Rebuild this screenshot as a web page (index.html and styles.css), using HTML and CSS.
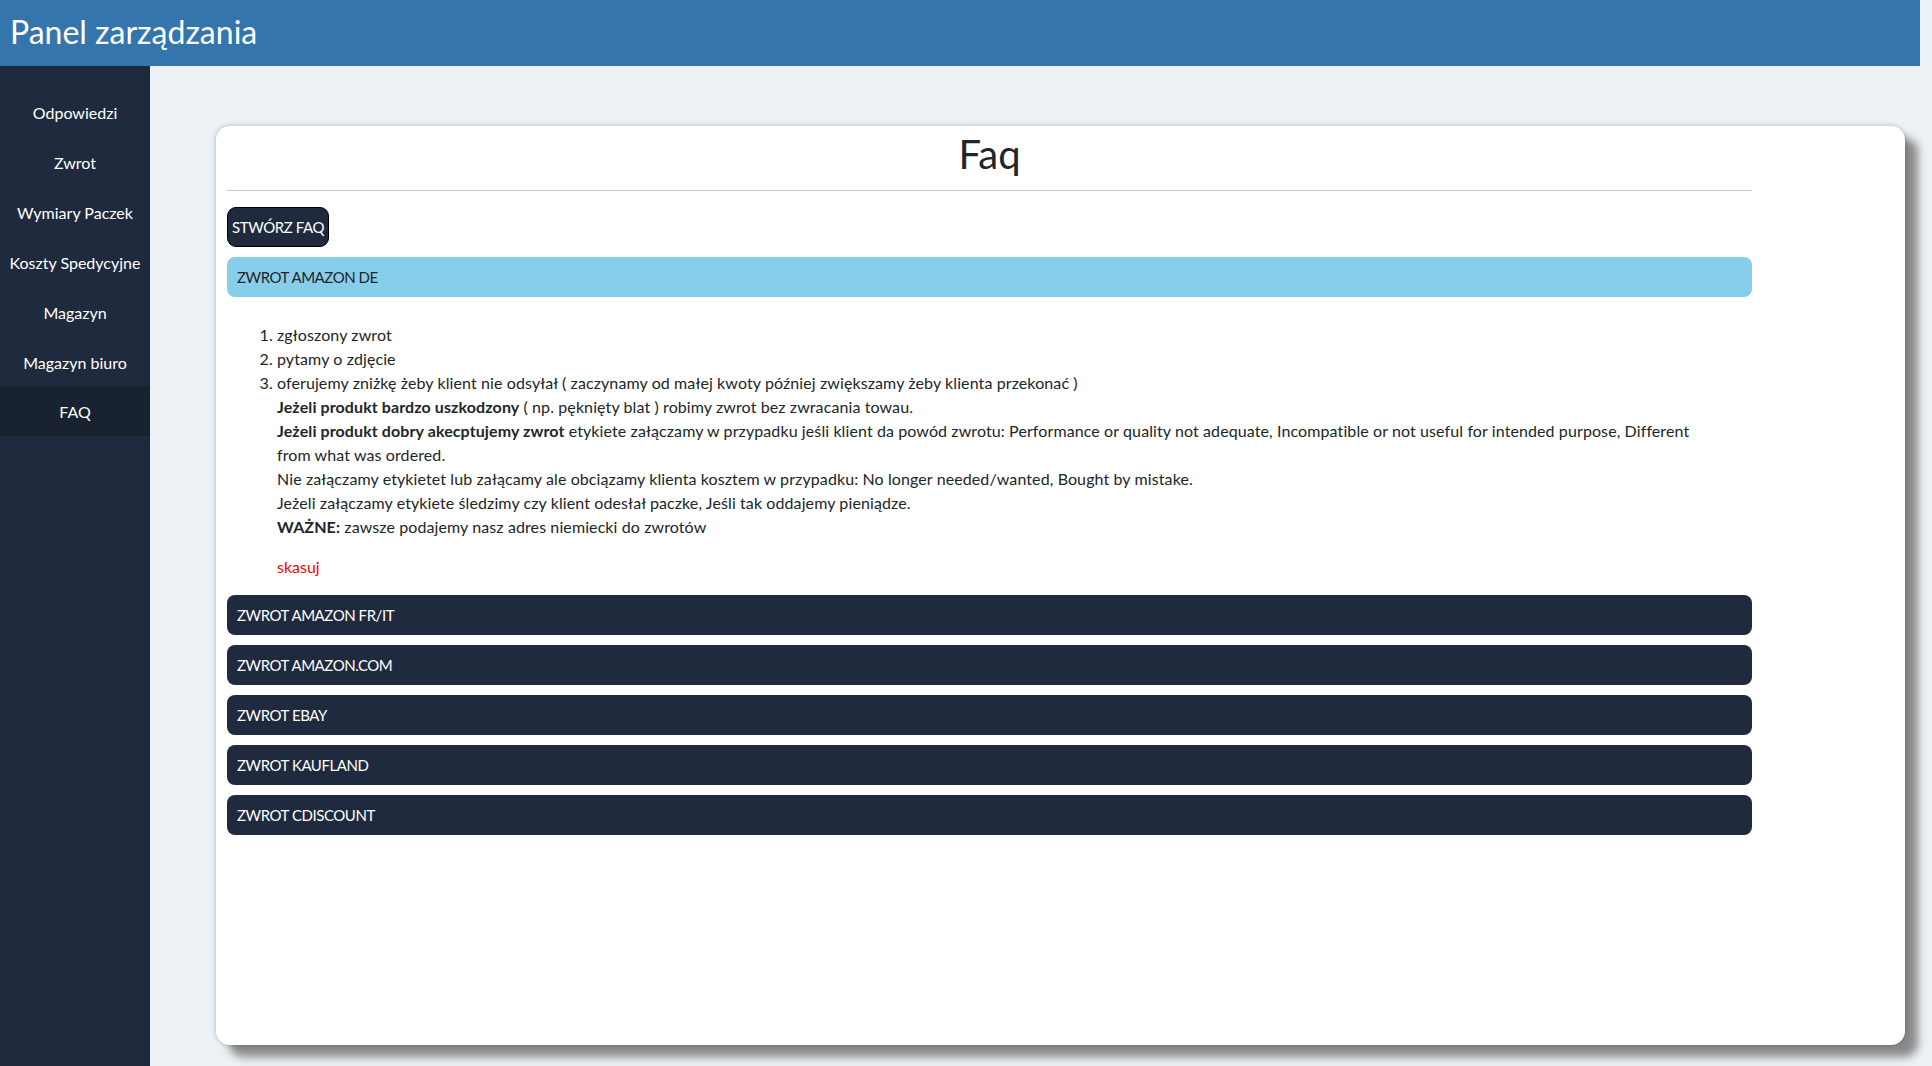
FILE: index.html
```html
<!DOCTYPE html>
<html lang="pl">
<head>
<meta charset="utf-8">
<title>Panel zarządzania</title>
<link rel="stylesheet" href="styles.css">
</head>
<body>
<header class="topbar">Panel zarządzania</header>
<div class="layout">
  <nav class="sidebar">
    <a class="nav-item">Odpowiedzi</a>
    <a class="nav-item">Zwrot</a>
    <a class="nav-item">Wymiary Paczek</a>
    <a class="nav-item">Koszty Spedycyjne</a>
    <a class="nav-item">Magazyn</a>
    <a class="nav-item">Magazyn biuro</a>
    <a class="nav-item active">FAQ</a>
  </nav>
  <main class="main">
    <section class="card">
      <div class="content">
        <h1 class="title">Faq</h1>
        <hr class="divider">
        <button class="create-btn">STWÓRZ FAQ</button>
        <div class="faq-list">
          <div class="faq">
            <div class="faq-head open">ZWROT AMAZON DE</div>
            <div class="faq-body">
              <ol class="steps">
                <li>zgłoszony zwrot</li>
                <li>pytamy o zdjęcie</li>
                <li>oferujemy zniżkę żeby klient nie odsyłał ( zaczynamy od małej kwoty później zwiększamy żeby klienta przekonać )<br>
                <b>Jeżeli produkt bardzo uszkodzony</b> ( np. pęknięty blat ) robimy zwrot bez zwracania towau.<br>
                <b>Jeżeli produkt dobry akecptujemy zwrot</b> etykiete załączamy w przypadku jeśli klient da powód zwrotu: Performance or quality not adequate, Incompatible or not useful for intended purpose, Different from what was ordered.<br>
                Nie załączamy etykietet lub załącamy ale obciązamy klienta kosztem w przypadku: No longer needed/wanted, Bought by mistake.<br>
                Jeżeli załączamy etykiete śledzimy czy klient odesłał paczke, Jeśli tak oddajemy pieniądze.<br>
                <b>WAŻNE:</b> zawsze podajemy nasz adres niemiecki do zwrotów</li>
              </ol>
              <a class="delete">skasuj</a>
            </div>
          </div>
          <div class="faq"><div class="faq-head">ZWROT AMAZON FR/IT</div></div>
          <div class="faq"><div class="faq-head">ZWROT AMAZON.COM</div></div>
          <div class="faq"><div class="faq-head">ZWROT EBAY</div></div>
          <div class="faq"><div class="faq-head">ZWROT KAUFLAND</div></div>
          <div class="faq"><div class="faq-head">ZWROT CDISCOUNT</div></div>
        </div>
      </div>
    </section>
  </main>
</div>
</body>
</html>
```
FILE: styles.css
```css
* { box-sizing: border-box; }
html, body { margin: 0; padding: 0; }
body {
  background: #ecf1f5;
  font-family: Lato, "Noto Sans", sans-serif;
  color: #212529;
  font-size: 16px;
  width: 1932px;
  height: 1066px;
  overflow: hidden;
}
.topbar {
  width: 1920px;
  height: 66px;
  background: #3575ad;
  color: #fff;
  font-size: 32px;
  line-height: 64px;
  padding-left: 10px;
}
.layout {
  display: flex;
  height: 1000px;
}
.sidebar {
  width: 150px;
  flex: none;
  background: #202a3e;
  padding-top: 21px;
  display: flex;
  flex-direction: column;
}
.nav-item {
  height: 50px;
  display: flex;
  align-items: center;
  justify-content: center;
  color: #fff;
  font-size: 16px;
  cursor: pointer;
}
.nav-item.active { background: #19222f; margin-top: -1px; }
.main {
  flex: 1;
  padding: 60px 27px 21px 66px;
}
.card {
  height: 100%;
  background: #fff;
  border-radius: 14px;
  padding: 4px 11px 0;
  box-shadow: 0 0 5px rgba(0,0,0,0.25), 13px 12px 8px #8a8a8a;
}
.content { width: 1525px; }
.title {
  margin: 0;
  font-size: 40px;
  font-weight: 400;
  line-height: 48px;
  text-align: center;
  color: #212529;
}
.divider {
  margin: 12px 0 16px;
  border: 0;
  border-top: 1px solid #c8c8c8;
}
.create-btn {
  height: 40px;
  padding: 0 4px;
  background: #202a3e;
  color: #fff;
  border: 1px solid #000;
  border-radius: 9px;
  font-family: inherit;
  font-size: 15px;
  letter-spacing: -0.4px;
  margin-bottom: 10px;
}
.faq-list { display: flex; flex-direction: column; gap: 10px; }
.faq-head {
  height: 40px;
  padding: 0 10px;
  display: flex;
  align-items: center;
  border-radius: 8px;
  background: #202a3e;
  color: #fff;
  font-size: 15px;
  letter-spacing: -0.45px;
}
.faq-head.open { background: #87ceeb; color: #212529; }
.faq-body { padding: 10px 30px 6px 10px; }
.steps {
  margin: 16px 0;
  padding-left: 40px;
  line-height: 24px;
  letter-spacing: 0.1px;
}
.delete {
  display: block;
  padding-left: 40px;
  color: #f00;
  line-height: 24px;
}
```
